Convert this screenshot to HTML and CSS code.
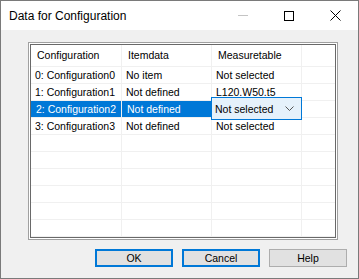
FILE: index.html
```html
<!DOCTYPE html>
<html lang="en">
<head>
    <meta charset="UTF-8">
    <title>Data for Configuration</title>
    <link rel="stylesheet" href="styles.css">
</head>
<body>
    <div class="window">
        <div class="titlebar">
            <span class="title">Data for Configuration</span>
            <div class="controls">
                <span class="ctl"><span class="min"></span></span>
                <span class="ctl"><span class="max"></span></span>
                <span class="ctl">
                    <svg width="11" height="11" viewBox="0 0 11 11"><path d="M0.5 0.5 L10.5 10.5 M10.5 0.5 L0.5 10.5" stroke="#000" stroke-width="1" fill="none"/></svg>
                </span>
            </div>
        </div>

        <div class="content">
            <div class="frame">
                <div class="grid">
                    <div class="cell head">Configuration</div>
                    <div class="cell head">Itemdata</div>
                    <div class="cell head">Measuretable</div>
                    <div class="cell head"></div>

                    <div class="cell">0: Configuration0</div>
                    <div class="cell">No item</div>
                    <div class="cell">Not selected</div>
                    <div class="cell"></div>

                    <div class="cell">1: Configuration1</div>
                    <div class="cell">Not defined</div>
                    <div class="cell">L120.W50.t5</div>
                    <div class="cell"></div>

                    <div class="cell selected">2: Configuration2</div>
                    <div class="cell selected">Not defined</div>
                    <div class="cell editing">
                        <div class="combo">
                            <span>Not selected</span>
                            <svg width="9" height="5" viewBox="0 0 9 5"><path d="M0.5 0.5 L4.5 4.5 L8.5 0.5" stroke="#555" stroke-width="1" fill="none"/></svg>
                        </div>
                    </div>
                    <div class="cell"></div>

                    <div class="cell">3: Configuration3</div>
                    <div class="cell">Not defined</div>
                    <div class="cell">Not selected</div>
                    <div class="cell"></div>

                    <div class="cell"></div><div class="cell"></div><div class="cell"></div><div class="cell"></div>
                    <div class="cell"></div><div class="cell"></div><div class="cell"></div><div class="cell"></div>
                    <div class="cell"></div><div class="cell"></div><div class="cell"></div><div class="cell"></div>
                    <div class="cell"></div><div class="cell"></div><div class="cell"></div><div class="cell"></div>
                    <div class="cell"></div><div class="cell"></div><div class="cell"></div><div class="cell"></div>
                    <div class="cell"></div><div class="cell"></div><div class="cell"></div><div class="cell"></div>
                </div>
            </div>

            <div class="buttons">
                <button class="btn default">OK</button>
                <button class="btn default">Cancel</button>
                <button class="btn">Help</button>
            </div>
        </div>
    </div>
</body>
</html>
```

FILE: styles.css
```css
* {
    box-sizing: border-box;
}
body {
    margin: 0;
    font-family: "Liberation Sans", Arial, sans-serif;
    font-size: 10.5px;
    color: #000;
    background: #fff;
}
.window {
    width: 359px;
    height: 279px;
    border: 1px solid #7a7a7a;
    background: #f0f0f0;
    display: flex;
    flex-direction: column;
}
.titlebar {
    height: 29px;
    background: #fff;
    display: flex;
    align-items: center;
    justify-content: space-between;
    padding-left: 8px;
}
.title {
    font-size: 12px;
}
.controls {
    display: flex;
    height: 100%;
}
.ctl {
    width: 46px;
    display: flex;
    align-items: center;
    justify-content: center;
}
.min {
    width: 10px;
    height: 1px;
    background: #c4c4c4;
}
.max {
    width: 10px;
    height: 10px;
    border: 1px solid #000;
}
.content {
    padding: 12px 11px 0 27px;
}
.frame {
    width: 310px;
    border: 1px solid #a0a0a0;
    padding: 1px;
    background: #fff;
}
.grid {
    border: 1px solid #696969;
    display: grid;
    grid-template-columns: 91px 90px 90px 1fr;
    grid-template-rows: 22px repeat(10, 17px);
    background: #fff;
}
.cell {
    border-right: 1px solid #f0f0f0;
    border-bottom: 1px solid #f0f0f0;
    padding-left: 4px;
    line-height: 16px;
    white-space: nowrap;
    overflow: visible;
}
.cell:nth-child(4n) {
    border-right: none;
}
.cell.head {
    line-height: 21px;
    padding-left: 6px;
}
.cell.selected {
    background: #0078d7;
    color: #fff;
    padding-left: 5px;
}
.cell.editing {
    position: relative;
}
.combo {
    position: absolute;
    left: -1px;
    top: -4px;
    width: 91px;
    height: 23px;
    border: 1px solid #0078d7;
    background: #e5f1fb;
    display: flex;
    align-items: center;
    justify-content: space-between;
    padding: 0 7px 0 3px;
}
.buttons {
    display: flex;
    justify-content: flex-end;
    gap: 9px;
    margin-top: 9px;
}
.btn {
    width: 78px;
    height: 18px;
    font-family: "Liberation Sans", Arial, sans-serif;
    font-size: 10.5px;
    background: #e1e1e1;
    border: 1px solid #adadad;
    padding: 0;
    color: #000;
}
.btn.default {
    border: 2px solid #0078d7;
}
```
